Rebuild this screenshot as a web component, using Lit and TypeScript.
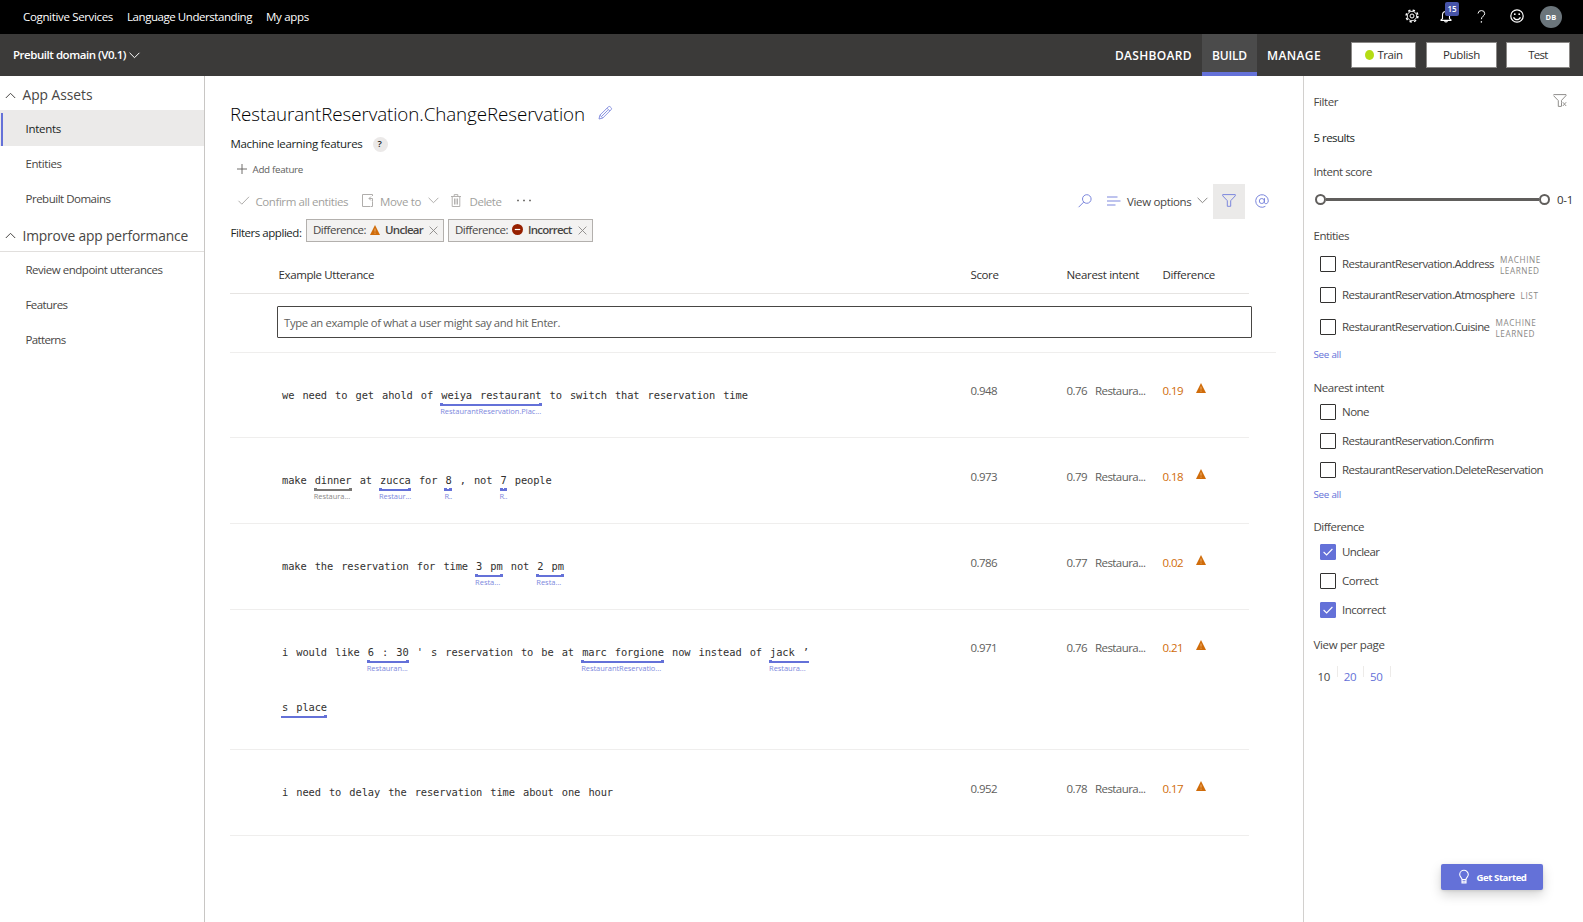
import { LitElement, html, css, svg, nothing } from "lit";
import { customElement } from "lit/decorators.js";
import { styleMap } from "lit/directives/style-map.js";

const SANS = '"Open Sans", "Noto Sans", sans-serif';
const ctx = document.createElement("canvas").getContext("2d")!;

/** Tracks a label so that it fills the given advance width. */
function t(text: string, width: number, size = 11.5, weight = 400, cls = "") {
  ctx.font = `${weight} ${size}px ${SANS}`;
  const gap = (width - ctx.measureText(text).width) / text.length;
  return html`<span class="t ${cls}" style=${styleMap({
    fontSize: `${size}px`,
    fontWeight: String(weight),
    letterSpacing: `${gap.toFixed(3)}px`,
  })}>${text}</span>`;
}

const icon = (w: number, h: number, body: unknown, cls = "") =>
  html`<svg class="i ${cls}" width=${w} height=${h} viewBox="0 0 ${w} ${h}" fill="none" stroke="currentColor">${body}</svg>`;

const chevDown = () => icon(11, 7, svg`<path d="M.6 .8l4.9 4.9L10.4 .8"/>`);
const chevUp = () => icon(11, 7, svg`<path d="M.8 6l4.7-4.7L10.2 6"/>`);
const cross = () => icon(9, 9, svg`<path d="M.6 .6l7.8 7.8M8.4 .6L.6 8.4" stroke-width=".9"/>`);
const warn = () =>
  icon(10, 10, svg`<path d="M5 0L10 10H0Z" fill="#d06c0a" stroke="none"/><path d="M5 3.6v3M5 7.6v1.1" stroke="#f3c08c" stroke-width=".8"/>`);
const minusDot = () =>
  icon(11, 11, svg`<circle cx="5.5" cy="5.5" r="5.5" fill="#962000" stroke="none"/><path d="M2.8 5.5h5.4" stroke="#fff" stroke-width="1.2"/>`);

type Tok = string | { e: string; label?: string; w?: number; kind?: string };
interface Row { tokens: Tok[][]; score: string; near: string; diff: string; size?: string }

const ROWS: Row[] = [
  {
    tokens: [["we need to get ahold of ", { e: "weiya restaurant", label: "RestaurantReservation.Plac...", w: 101 }, " to switch that reservation time"]],
    score: "0.948", near: "0.76", diff: "0.19", size: "lead-row",
  },
  {
    tokens: [["make ", { e: "dinner", label: "Restaura...", w: 36.5, kind: "muted" }, " at ", { e: "zucca", label: "Restaur...", w: 32 }, " for ", { e: "8", label: "R..", w: 7.5 }, " , not ", { e: "7", label: "R..", w: 7.5 }, " people"]],
    score: "0.973", near: "0.79", diff: "0.18",
  },
  {
    tokens: [["make the reservation for time ", { e: "3 pm", label: "Resta...", w: 25 }, " not ", { e: "2 pm", label: "Resta...", w: 25 }]],
    score: "0.786", near: "0.77", diff: "0.02",
  },
  {
    tokens: [
      ["i would like ", { e: "6 : 30", label: "Restauran...", w: 41 }, " ' s reservation to be at ", { e: "marc forgione", label: "RestaurantReservatio...", w: 80 }, " now instead of ", { e: "jack ’", label: "Restaura...", w: 36.5, kind: "open-end" }],
      [{ e: "s place", kind: "open-start" }],
    ],
    score: "0.971", near: "0.76", diff: "0.21", size: "tall",
  },
  { tokens: [["i need to delay the reservation time about one hour"]], score: "0.952", near: "0.78", diff: "0.17" },
];

const reset = css`
  * { box-sizing: border-box; }
  .t { white-space: pre; display: block; flex: none; line-height: 16px; }
  .i { display: block; flex: none; overflow: visible; }
`;

@customElement("app-header")
class AppHeader extends LitElement {
  static styles = [reset, css`
    :host { display: block; color: #fff; }
    .top { height: 34px; background: #000; display: flex; align-items: center; padding: 0 21px 0 23px; }
    .links { display: flex; gap: 14px; flex: 1; }
    .tools { display: flex; align-items: center; padding-bottom: 2px; }
    .bell { position: relative; margin-left: 21.5px; width: 12px; }
    .badge { position: absolute; left: 5px; top: -8px; width: 14px; height: 14px; border-radius: 2px; background: #4653a8; display: flex; align-items: center; justify-content: center; }
    .help { margin-left: 25px; }
    .smile { margin-left: 24px; }
    .avatar { margin-left: 16px; margin-top: 2px; width: 22px; height: 22px; border-radius: 50%; background: #6b757b; display: flex; align-items: center; justify-content: center; }
    .nav { height: 42px; background: #3b3a39; display: flex; align-items: center; padding: 0 13px; }
    .app { display: flex; align-items: center; gap: 3px; flex: 1; }
    .tab { height: 42px; padding: 6px 10px 0; display: flex; align-items: center; border-bottom: 4px solid transparent; }
    .on { background: #4b4b4b; border-bottom-color: #6471d8; }
    .btn { height: 26px; border: 1px solid #8a8886; background: #fff; color: #323130; display: flex; align-items: center; justify-content: center; gap: 4px; }
    .train { width: 65px; margin-left: 20px; }
    .publish { width: 71px; margin-left: 10px; }
    .test { width: 64px; margin-left: 9px; }
    .dot { width: 9px; height: 10px; border-radius: 50%; background: #b4dc14; }
  `];
  render() {
    return html`
      <div class="top">
        <div class="links">${t("Cognitive Services", 90)}${t("Language Understanding", 125)}${t("My apps", 43)}</div>
        <div class="tools">
          ${icon(14, 14, svg`<circle cx="7" cy="7" r="2"/><circle cx="7" cy="7" r="4.7" stroke-width=".9"/><circle cx="7" cy="7" r="5.9" stroke-width="1.5" stroke-dasharray="2.3 2.334"/>`)}
          <div class="bell">
            ${icon(12, 13, svg`<path d="M2.5 9V5a3.5 3.5 0 0 1 7 0v4M.5 10.4L2.5 8.6M11.5 10.4L9.5 8.6M.5 10.4h11M4.6 11a1.5 1.5 0 0 0 2.8 0" stroke-width="1.1"/>`)}
            <div class="badge">${t("15", 9, 8, 600)}</div>
          </div>
          ${icon(9, 13, svg`<path d="M1 3.5A3.3 3.3 0 0 1 4.4.6 3.1 3.1 0 0 1 7.7 3.7C7.7 6 4.4 6.3 4.4 9.2"/><path d="M4.4 11.2v1.4" stroke-width="1.3"/>`, "help")}
          ${icon(14, 14, svg`<circle cx="7" cy="7" r="6.2" stroke-width="1.2"/><circle cx="4.8" cy="5.2" r=".9" fill="currentColor" stroke="none"/><circle cx="9.2" cy="5.2" r=".9" fill="currentColor" stroke="none"/><path d="M3.6 8.2a3.6 3.6 0 0 0 6.8 0" stroke-width="1.2"/>`, "smile")}
          <div class="avatar">${t("DB", 11, 7.5, 700)}</div>
        </div>
      </div>
      <div class="nav">
        <div class="app">${t("Prebuilt domain (V0.1)", 113, 11.5, 600)}${chevDown()}</div>
        <div class="tab">${t("DASHBOARD", 77, 12, 600)}</div>
        <div class="tab on">${t("BUILD", 35, 12, 600)}</div>
        <div class="tab">${t("MANAGE", 54, 12, 600)}</div>
        <div class="btn train"><i class="dot"></i>${t("Train", 25)}</div>
        <div class="btn publish">${t("Publish", 37)}</div>
        <div class="btn test">${t("Test", 19.5)}</div>
      </div>`;
  }
}

@customElement("app-sidebar")
class AppSidebar extends LitElement {
  static styles = [reset, css`
    :host { display: block; width: 205px; border-right: 1px solid #c8c6c4; color: #484644; flex: none; box-sizing: border-box; }
    .group { display: flex; align-items: center; gap: 6.5px; padding-left: 5px; height: 34px; padding-top: 4px; }
    .second { height: 35px; padding-top: 3px; border-bottom: 1px solid #e1dfdd; margin-top: 1px; }
    .item { height: 35px; display: flex; align-items: center; padding-left: 25.5px; }
    .on { background: #ebeae9; height: 36px; padding: 2px 0 0 1px; color: #201f1e; }
    .mark { width: 2px; height: 33px; background: #6471d8; margin-right: 22.5px; }
  `];
  render() {
    return html`
      <div class="group">${chevUp()}${t("App Assets", 70, 13.8)}</div>
      <div class="item on"><i class="mark"></i>${t("Intents", 35.5)}</div>
      <div class="item">${t("Entities", 36)}</div>
      <div class="item">${t("Prebuilt Domains", 85)}</div>
      <div class="group second">${chevUp()}${t("Improve app performance", 165.5, 13.8)}</div>
      <div class="item">${t("Review endpoint utterances", 137)}</div>
      <div class="item">${t("Features", 42)}</div>
      <div class="item">${t("Patterns", 40)}</div>`;
  }
}

@customElement("intent-main")
class IntentMain extends LitElement {
  static styles = [reset, css`
    :host { display: block; flex: 1; min-width: 0; padding-left: 25px; color: #323130; }
    .title { display: flex; align-items: center; gap: 13px; height: 26px; margin-top: 25px; color: #000; }
    .title .t { line-height: 26px; }
    .blue { color: #7c87dd; }
    .ml { display: flex; align-items: center; gap: 10px; height: 16px; margin-top: 9px; padding-left: .5px; color: #201f1e; }
    .q { width: 15px; height: 15px; border-radius: 50%; background: #ebe9e8; display: flex; align-items: center; justify-content: center; }
    .add { display: flex; align-items: center; gap: 6px; height: 16px; margin-top: 10px; padding-left: 6.5px; color: #605e5c; }
    .up { margin-bottom: 3px; }
    .bar { display: flex; align-items: center; height: 35px; margin-top: 6px; color: #b0aeac; }
    .bar .i { margin-top: -2px; }
    .bar .txt { color: #a19f9d; }
    .bar .check { margin-left: 8px; }
    .confirm { margin: 0 14px 0 5.5px; }
    .move { margin: 0 6.5px 0 5px; }
    .bar .trash { margin-left: 12.5px; margin-right: 8.5px; }
    .bar .more { margin-left: 15px; }
    .space { flex: 1; }
    .view { color: #484644; display: flex; align-items: center; margin-left: 15px; }
    .options { margin: 0 5.5px 0 5.5px; }
    .grey { color: #8a8886; }
    .fbtn { width: 32px; height: 35px; background: #ebeae9; display: flex; align-items: center; justify-content: center; margin-left: 5px; }
    .bar .at { margin-left: 10px; margin-right: 34px; }
    .filters { display: flex; align-items: flex-start; height: 23px; color: #201f1e; }
    .lead { margin-top: 6px; margin-right: 4.5px; padding-left: .5px; }
    .chip { height: 23px; border: 1px solid #b3b0ad; background: #f3f2f1; display: flex; align-items: center; padding: 0 5px 0 6px; margin-right: 4px; color: #484644; }
    .chip .t { margin-top: -1px; }
    .mark { margin: -2px 5px 0 4px; }
    .close { margin: -1px 0 0 6px; }
    .thead, .row { display: grid; grid-template-columns: 740.5px 96px 96px 1fr; width: 1019px; border-bottom: 1px solid #e6e4e2; }
    .thead { height: 52px; padding-top: 25px; }
    .first { padding-left: 48.5px; }
    .entry { width: 1046px; height: 59px; border-bottom: 1px solid #efeeed; padding: 12px 0 0 47px; }
    .input { width: 975px; height: 32px; border: 1px solid #484644; display: flex; align-items: center; padding: 2px 0 0 6px; color: #605e5c; border-radius: 1px; }
    .row { height: 86px; border-color: #efeeed; color: #605e5c; }
    .lead-row { height: 85px; }
    .tall { height: 140px; }
    .num { display: flex; margin-top: 31px; }
    .lead-row .num, .tall .num { margin-top: 30px; }
    .near { gap: 8px; }
    .warn { padding-left: 12.5px; }
    .diff { color: #d06c0a; }
    .utt { padding: 14px 0 0 52px; color: #323130; }
    .line { display: flex; height: 55px; align-items: center; font: 10.4px/18px "DejaVu Sans Mono", monospace; letter-spacing: -.12px; word-spacing: 2px; white-space: pre; }
    .ent { position: relative; display: block; }
    .ul { position: absolute; left: -1px; right: -.5px; top: 18px; height: 2px; background: #6471d8; }
    .ul::before, .ul::after { content: ""; position: absolute; width: 3px; height: 3px; top: -.5px; background: #6471d8; }
    .ul::before { left: 0; }
    .ul::after { right: 0; }
    .open-end .ul::after, .open-start .ul::before { display: none; }
    .muted .ul, .muted .ul::before, .muted .ul::after { background: #797775; }
    .tag { position: absolute; left: -1px; top: 19px; word-spacing: 0; font-family: "Open Sans", sans-serif; color: #7d88dd; }
    .muted .tag { color: #8a8886; }
    .tag .t { line-height: 12px; }
  `];

  tok(k: Tok) {
    if (typeof k === "string") return html`<span>${k}</span>`;
    return html`<span class="ent ${k.kind ?? ""}">${k.e}<i class="ul"></i>${k.label ? html`<span class="tag">${t(k.label, k.w!, 7.5)}</span>` : nothing}</span>`;
  }

  chip(mark: unknown, name: string, w: number) {
    return html`<div class="chip">${t("Difference:", 53)}<span class="mark">${mark}</span>${t(name, w, 11.5, 600)}<span class="close grey">${cross()}</span></div>`;
  }

  render() {
    return html`
      <div class="title">${t("RestaurantReservation.ChangeReservation", 355, 18.8, 300)}
        ${icon(14, 14, svg`<path d="M1 13l.9-3.8L10.2 1a1.5 1.5 0 0 1 2.2 0l.6.6a1.5 1.5 0 0 1 0 2.2L4.8 12zM9 2.2l2.8 2.8M1.9 9.2l2.9 2.8M9.8 4.2L3.6 10.4" stroke-width=".9"/>`, "blue up")}
      </div>
      <div class="ml">${t("Machine learning features", 132)}<span class="q">${t("?", 5, 9.5, 600)}</span></div>
      <div class="add">${icon(10, 10, svg`<path d="M5 0v10M0 5h10" stroke-width=".9"/>`, "up")}${t("Add feature", 50.5, 9.8)}</div>
      <div class="bar">
        ${icon(12, 9, svg`<path d="M.5 4.8l3.3 3.4L11 .8"/>`, "check")}
        <span class="txt confirm">${t("Confirm all entities", 92.5)}</span>
        ${icon(13, 13, svg`<path d="M8 12.5H.5V.5h10v1.5M10.5 7.5v5h-2M7 4.5h3.5v3M9 2.5l-2 2 2 2"/>`)}
        <span class="txt move">${t("Move to", 41)}</span>${chevDown()}
        ${icon(10, 13, svg`<path d="M0 2.5h10M3.2 2.3V.6h3.6v1.7M1.2 2.5v10h7.6v-10M3.5 4.5v6M5 4.5v6M6.5 4.5v6" stroke-width=".95"/>`, "trash")}
        <span class="txt">${t("Delete", 32)}</span>
        ${icon(14, 3, svg`<path d="M0 1.5h2M6 1.5h2M12 1.5h2" stroke="#797775" stroke-width="1.6"/>`, "more")}
        <span class="space"></span>
        ${icon(14, 14, svg`<circle cx="8.8" cy="5" r="4.3"/><path d="M5.7 8.1L.6 13.2"/>`, "blue")}
        <span class="view">
          ${icon(14, 10, svg`<path d="M0 1h10.5M0 5h13.5M0 9h8.5" stroke="#7c87dd"/>`)}
          <span class="options">${t("View options", 64.5)}</span><span class="grey">${chevDown()}</span>
        </span>
        <span class="fbtn blue">${icon(14, 13, svg`<path d="M.7 .6h12.6v1.2L8.7 6.7v5.6H5.3V6.7L.7 1.8z"/>`)}</span>
        ${icon(14, 14, svg`<circle cx="6.8" cy="7" r="2.5"/><path d="M9.5 4.2v4.3c0 1.9 3.8 1.7 3.8-1.6A6.3 6.3 0 1 0 10.4 12.3"/>`, "at blue")}
      </div>
      <div class="filters"><span class="lead">${t("Filters applied:", 71)}</span>${this.chip(warn(), "Unclear", 38)}${this.chip(minusDot(), "Incorrect", 43.5)}</div>
      <div class="thead"><div class="first">${t("Example Utterance", 95.5)}</div>${t("Score", 28)}${t("Nearest intent", 72.5)}${t("Difference", 52.5)}</div>
      <div class="entry"><div class="input">${t("Type an example of what a user might say and hit Enter.", 276, 11.3)}</div></div>
      ${ROWS.map((r) => html`
        <div class="row ${r.size ?? ""}">
          <div class="utt">${r.tokens.map((l) => html`<div class="line">${l.map((k) => this.tok(k))}</div>`)}</div>
          <div class="num">${t(r.score, 26.5)}</div>
          <div class="num near">${t(r.near, 20.5)}${t("Restaura...", 50.5)}</div>
          <div class="num diff">${t(r.diff, 20.5)}<span class="warn">${warn()}</span></div>
        </div>`)}`;
  }
}

@customElement("filter-panel")
class FilterPanel extends LitElement {
  static styles = [reset, css`
    :host { display: block; width: 280px; flex: none; border-left: 1px solid #d2d0ce; padding: 18px 0 0 9.5px; color: #484644; box-sizing: border-box; }
    .head { display: flex; justify-content: space-between; padding-right: 16px; height: 16px; }
    .clear { color: #8a8886; }
    .results { margin-top: 20px; color: #201f1e; }
    .score { margin-top: 18px; }
    .slider { display: flex; align-items: center; margin-top: 11px; height: 16px; padding-left: 1px; color: #323130; }
    .knob { width: 11px; height: 11px; border: 2px solid #605e5c; border-radius: 50%; }
    .track { width: 213px; height: 3px; background: #605e5c; }
    .range { margin-left: 7.5px; margin-top: 2px; }
    .ents { margin-top: 21px; }
    .opt { display: flex; align-items: center; height: 16px; padding-left: 6.5px; }
    .box { width: 16px; height: 16px; border: 1px solid #323130; border-radius: 1px; margin-right: 6px; background: #fff; display: flex; align-items: center; justify-content: center; color: #fff; flex: none; }
    .box.on { background: #6471d8; border-color: #6471d8; }
    .kind { margin-left: 6px; color: #8a8886; padding-top: 1px; }
    .kind .t { line-height: 11px; }
    .e1 { margin-top: 12px; } .e2 { margin-top: 15px; } .e3 { margin-top: 16px; }
    .link { color: #6471d8; }
    .l1 { margin-top: 12px; }
    .near { margin-top: 17px; }
    .n1 { margin-top: 8px; }
    .step { margin-top: 13px; }
    .l2 { margin-top: 9px; }
    .diff { margin-top: 16px; }
    .d1 { margin-top: 9px; }
    .page { margin-top: 19px; }
    .pages { display: flex; margin-top: 13px; padding-left: 4px; }
    .pg { width: 26px; display: flex; justify-content: space-between; margin-right: .3px; }
    .pg .t { margin-top: 3px; }
    .pg::after { content: ""; width: 1px; height: 11px; background: #edebe9; margin-right: 5.5px; }
  `];
  opt(cls: string, label: string, w: number, kind: [string, number][] = [], on = false) {
    return html`<div class="opt ${cls}"><span class="box ${on ? "on" : ""}">${on ? icon(10, 8, svg`<path d="M.6 4l3 3L9.4 1" stroke-width="1.1"/>`) : nothing}</span>${t(label, w)}
      ${kind.length ? html`<span class="kind">${kind.map(([s, kw]) => t(s, kw, 8.2))}</span>` : nothing}</div>`;
  }
  render() {
    const ml: [string, number][] = [["MACHINE", 41], ["LEARNED", 39.5]];
    return html`
      <div class="head">${t("Filter", 24.5)}<span class="clear">${icon(14, 13, svg`<path d="M.5 .6h12.5v1L8.5 6.4v2M.5 1.6l4.8 5v5.8h3M8.5 8.4v4" stroke-width=".95"/><path d="M9.8 8.2l3.4 3.8M13.2 8.2L9.8 12" stroke-width=".9"/>`)}</span></div>
      <div class="results">${t("5 results", 41)}</div>
      <div class="score">${t("Intent score", 58.5)}</div>
      <div class="slider"><i class="knob"></i><i class="track"></i><i class="knob"></i><span class="range">${t("0-1", 16)}</span></div>
      <div class="ents">${t("Entities", 35.5)}</div>
      ${this.opt("e1", "RestaurantReservation.Address", 152, ml)}
      ${this.opt("e2", "RestaurantReservation.Atmosphere", 172.5, [["LIST", 18]])}
      ${this.opt("e3", "RestaurantReservation.Cuisine", 147.5, ml)}
      <div class="link l1">${t("See all", 27.5, 9.8)}</div>
      <div class="near">${t("Nearest intent", 70.5)}</div>
      ${this.opt("n1", "None", 27)}
      ${this.opt("step", "RestaurantReservation.Confirm", 151.5)}
      ${this.opt("step", "RestaurantReservation.DeleteReservation", 201)}
      <div class="link l2">${t("See all", 27.5, 9.8)}</div>
      <div class="diff">${t("Difference", 50.5)}</div>
      ${this.opt("d1", "Unclear", 37.5, [], true)}
      ${this.opt("step", "Correct", 36)}
      ${this.opt("step", "Incorrect", 43.5, [], true)}
      <div class="page">${t("View per page", 71)}</div>
      <div class="pages"><span class="pg">${t("10", 12.5)}</span><span class="pg link">${t("20", 12.5)}</span><span class="pg link">${t("50", 12.5)}</span></div>`;
  }
}

@customElement("app-root")
class AppRoot extends LitElement {
  static styles = [reset, css`
    :host { display: flex; flex-direction: column; height: 922px; background: #fff; font-family: "Open Sans", "Noto Sans", sans-serif; position: relative; overflow: hidden; }
    .body { display: flex; flex: 1; min-height: 0; }
    .start { position: absolute; right: 40px; bottom: 32px; width: 102px; height: 26px; border-radius: 2px; background: #6471d8; color: #fff; display: flex; align-items: center; padding-left: 17.5px; gap: 8px; box-shadow: 0 5px 12px rgba(0,0,0,.17), 0 1px 3px rgba(0,0,0,.1); }
    .start .t { padding-top: 1px; }
  `];
  render() {
    return html`
      <app-header></app-header>
      <div class="body"><app-sidebar></app-sidebar><intent-main></intent-main><filter-panel></filter-panel></div>
      <div class="start">${icon(10, 14, svg`<path d="M3 9.5C3 7.6.7 7 .7 4.6a4.3 4.3 0 0 1 8.6 0C9.3 7 7 7.6 7 9.5zM3 9.5v3.4h4V9.5M3 11.3h4" stroke-width="1.1"/>`)}${t("Get Started", 50, 9.6, 700)}</div>`;
  }
}
